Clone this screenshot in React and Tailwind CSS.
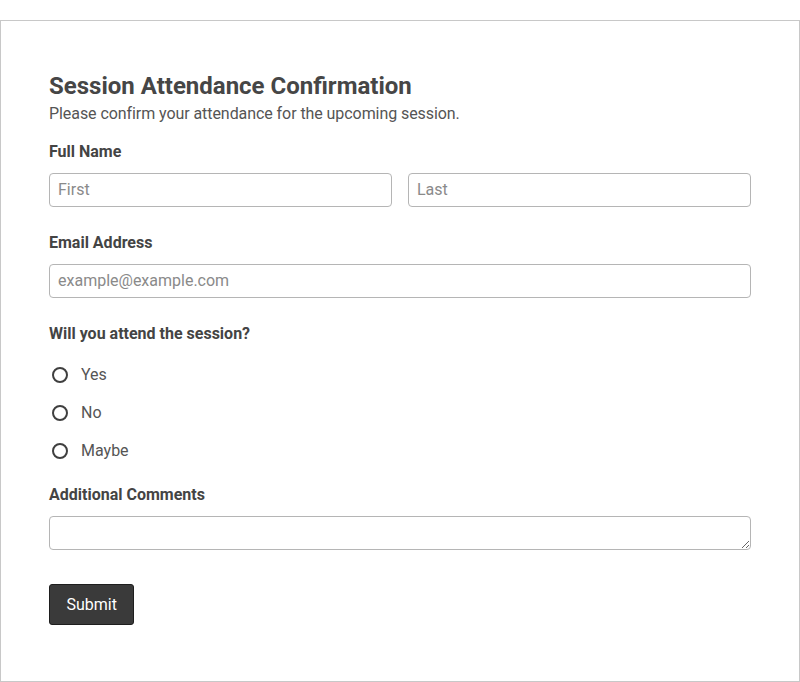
import React, { useState } from "react";

const options = ["Yes", "No", "Maybe"];

const inputCls =
  "block w-full h-[34px] px-2 pb-[2px] border border-[#b5b5b5] rounded-[4px] text-[16px] text-[#444] placeholder:text-[#8a8a8a] bg-white outline-none";

const App = () => {
  const [attend, setAttend] = useState(null);

  return (
    <div className="bg-white min-h-[682px] pt-[20px]" style={{ fontFamily: "Roboto, 'Liberation Sans', sans-serif" }}>
      <div className="border border-[#c8c8c8] h-[662px] px-[48px] pt-[51px] text-[#444]">
        <h2 className="text-[24px] leading-[28px] font-bold text-[#464646]">Session Attendance Confirmation</h2>
        <p className="mt-[4px] text-[16px] leading-[20px] tracking-[-0.07px] text-[#555]">
          Please confirm your attendance for the upcoming session.
        </p>

        {/* Full name */}
        <label className="block mt-[18px] mb-[11px] text-[16px] leading-[20px] font-bold">Full Name</label>
        <div className="grid grid-cols-2 gap-[16px]">
          <input className={inputCls} placeholder="First" />
          <input className={inputCls} placeholder="Last" />
        </div>

        <label className="block mt-[26px] mb-[11px] text-[16px] leading-[20px] font-bold">Email Address</label>
        <input className={inputCls} placeholder="example@example.com" />

        <p className="mt-[26px] text-[16px] leading-[20px] font-bold">Will you attend the session?</p>
        <div className="mt-[12px]">
          {options.map((opt) => (
            <label key={opt} className="flex items-center h-[38px] cursor-pointer" onClick={() => setAttend(opt)}>
              <span className="ml-[3px] w-[16px] h-[16px] rounded-full border-2 border-[#3f3f3f] flex items-center justify-center">
                {attend === opt && <span className="w-[8px] h-[8px] rounded-full bg-[#3f3f3f]" />}
              </span>
              <span className="ml-[13px] text-[16px] text-[#555]">{opt}</span>
            </label>
          ))}
        </div>

        <label className="block mt-[15px] mb-[11px] text-[16px] leading-[20px] font-bold">Additional Comments</label>
        <textarea className="block w-full h-[34px] px-2 py-1 border border-[#b5b5b5] rounded-[4px] text-[16px] outline-none" />

        <button className="mt-[34px] h-[41px] px-[16.5px] bg-[#3a3a3a] border border-[#1e1e1e] rounded-[3px] text-white text-[16px]">
          Submit
        </button>
      </div>
    </div>
  );
};

export default App;
